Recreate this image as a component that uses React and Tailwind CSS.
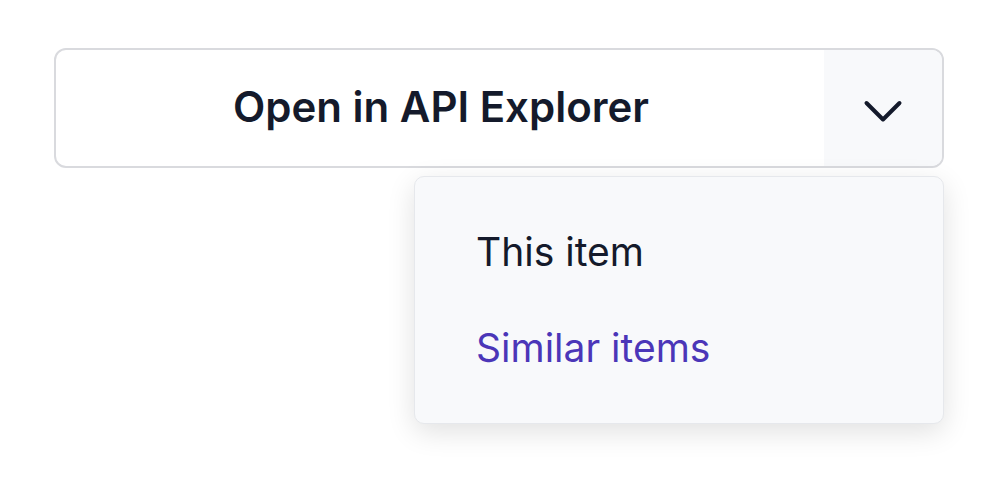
export default function App() {
  return (
    <div className="w-[1000px] h-[497px] bg-white pt-[48px] pl-[54px] font-['Inter',sans-serif]">
      <div className="relative w-[890px]">
        <div className="flex h-[120px] rounded-[12px] border-2 border-[#d9dade] overflow-hidden bg-white">
          <button className="flex-1 flex items-center justify-center text-[42px] font-semibold text-[#141a2b] pl-[2px] pb-[4px]">
            Open in API Explorer
          </button>
          <div className="w-[118px] flex items-center justify-center bg-[#f8f9fb]">
            <svg width="40" height="26" viewBox="0 0 40 26" fill="none" className="mt-[8px]">
              <polyline
                points="3.5,4 20,20.5 36.5,4"
                stroke="#141a2b"
                strokeWidth="4"
                strokeLinecap="round"
                strokeLinejoin="round"
              />
            </svg>
          </div>
        </div>

        {/* Dropdown menu */}
        <div className="absolute right-0 top-[128px] w-[530px] py-[27px] rounded-[10px] border border-[#e6e8ec] bg-[#f8f9fb] shadow-[0_8px_28px_rgba(0,0,0,0.12)]">
          <div className="h-[96px] flex items-center pl-[61px] text-[39px] text-[#141a2b]">This item</div>
          <div className="h-[96px] flex items-center pl-[61px] text-[39px] text-[#4b36b8]">Similar items</div>
        </div>
      </div>
    </div>
  );
}
